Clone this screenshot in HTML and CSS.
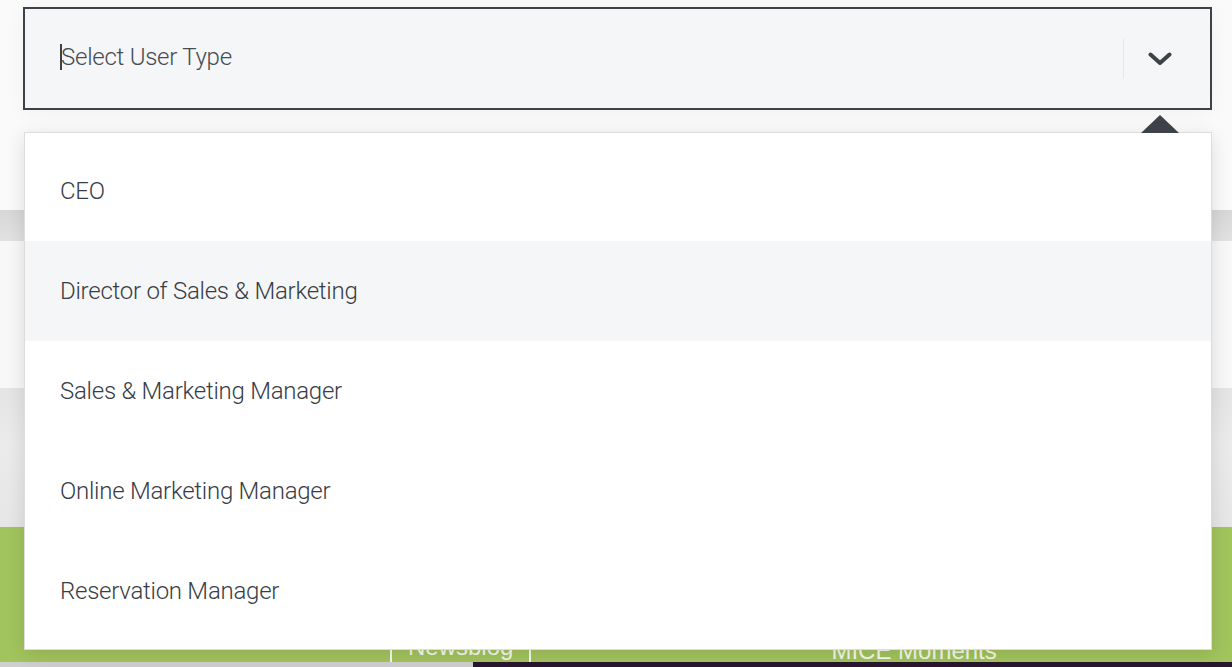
FILE: index.html
```html
<!DOCTYPE html>
<html lang="en">
<head>
  <meta charset="UTF-8">
  <title>Select User Type</title>
  <link rel="stylesheet" href="styles.css">
</head>
<body>

  <!-- Page behind the open dropdown -->
  <div class="backdrop">
    <div class="band band-top"></div>
    <div class="band band-rule"></div>
    <div class="band band-light"></div>
    <div class="band band-gray"></div>
    <div class="band band-green">
      <div class="footer-links">
        <span class="footer-link boxed">Newsblog</span>
        <span class="footer-link">MICE Moments</span>
      </div>
    </div>
    <div class="band band-bottom">
      <div class="bottom-left"></div>
      <div class="bottom-right"></div>
    </div>
  </div>

  <!-- User type picker (open) -->
  <div class="picker">
    <div class="picker-control">
      <div class="picker-value"><span class="caret"></span>Select User Type</div>
      <div class="picker-indicators">
        <span class="picker-sep"></span>
        <svg class="chevron" width="24" height="14" viewBox="0 0 24 14">
          <path d="M2.5 2.5 L12 11 L21.5 2.5" fill="none" stroke="#3d4148" stroke-width="4" stroke-linecap="round" stroke-linejoin="round"/>
        </svg>
      </div>
    </div>
    <div class="picker-menu">
      <span class="menu-arrow"></span>
      <div class="option">CEO</div>
      <div class="option focused">Director of Sales &amp; Marketing</div>
      <div class="option">Sales &amp; Marketing Manager</div>
      <div class="option">Online Marketing Manager</div>
      <div class="option">Reservation Manager</div>
    </div>
  </div>

</body>
</html>
```

FILE: styles.css
```css
/* Global */
body {
  margin: 0;
  font-family: Roboto, "Liberation Sans", sans-serif;
  background: #fafafa;
  overflow: hidden;
}

/* Backdrop page */
.backdrop {
  height: 667px;
  display: flex;
  flex-direction: column;
}
.band-top {
  height: 210px;
  background: #fafafa;
}
.band-rule {
  height: 31px;
  background: linear-gradient(#d7d7d7, #e2e2e2);
}
.band-light {
  height: 147px;
  background: #f8f8f8;
}
.band-gray {
  height: 139px;
  background: linear-gradient(#e4e4e4, #ebebeb 40%, #e6e6e6);
}
.band-green {
  height: 135px;
  background: #a2c45d;
  display: flex;
  align-items: flex-end;
}
.footer-links {
  display: flex;
  align-items: flex-end;
  padding-left: 390px;
  height: 30px;
  color: #fff;
  font-family: "Liberation Sans", Arial, sans-serif;
  font-size: 24px;
}
.footer-link {
  line-height: 30px;
  opacity: 0.9;
  margin-bottom: -4px;
}
.footer-link.boxed {
  border-left: 2px solid #fff;
  border-right: 2px solid #fff;
  padding: 0 16px;
  margin-right: 300px;
  margin-bottom: 0;
}
.band-bottom {
  height: 5px;
  display: flex;
}
.bottom-left {
  width: 473px;
  background: #cfcfcf;
}
.bottom-right {
  flex: 1;
  background: #2b1630;
}

/* Picker */
.picker {
  position: absolute;
  top: 7px;
  left: 23px;
  width: 1189px;
}
.picker-control {
  height: 99px;
  border: 2px solid #3d4148;
  background: #f5f6f8;
  display: flex;
  align-items: center;
  box-shadow: 0 2px 20px rgba(0,0,0,0.04);
}
.picker-value {
  flex: 1;
  padding-left: 35px;
  padding-bottom: 4px;
  font-size: 24px;
  font-weight: 300;
  letter-spacing: -0.25px;
  color: #454a53;
  display: flex;
  align-items: center;
}
.caret {
  width: 2px;
  height: 26px;
  background: #3d4148;
  margin-right: -1px;
}
.picker-indicators {
  display: flex;
  align-items: center;
  height: 100%;
}
.picker-sep {
  width: 1px;
  height: 40px;
  background: #e6e7ea;
}
.chevron {
  margin: 0 38px 0 24px;
}

.picker-menu {
  position: relative;
  margin-top: 22px;
  margin-left: 1px;
  width: 1186px;
  background: #fff;
  border: 1px solid #dcdcdc;
  padding: 8px 0 8px;
  box-shadow: 0 4px 18px rgba(0,0,0,0.12);
}
.menu-arrow {
  position: absolute;
  top: -18px;
  right: 32px;
  width: 0;
  height: 0;
  border-left: 19px solid transparent;
  border-right: 19px solid transparent;
  border-bottom: 18px solid #3d4148;
}
.option {
  height: 100px;
  display: flex;
  align-items: center;
  padding-left: 35px;
  font-size: 24px;
  font-weight: 300;
  letter-spacing: -0.25px;
  color: #383c45;
}
.option.focused {
  background: #f5f6f8;
}
```
